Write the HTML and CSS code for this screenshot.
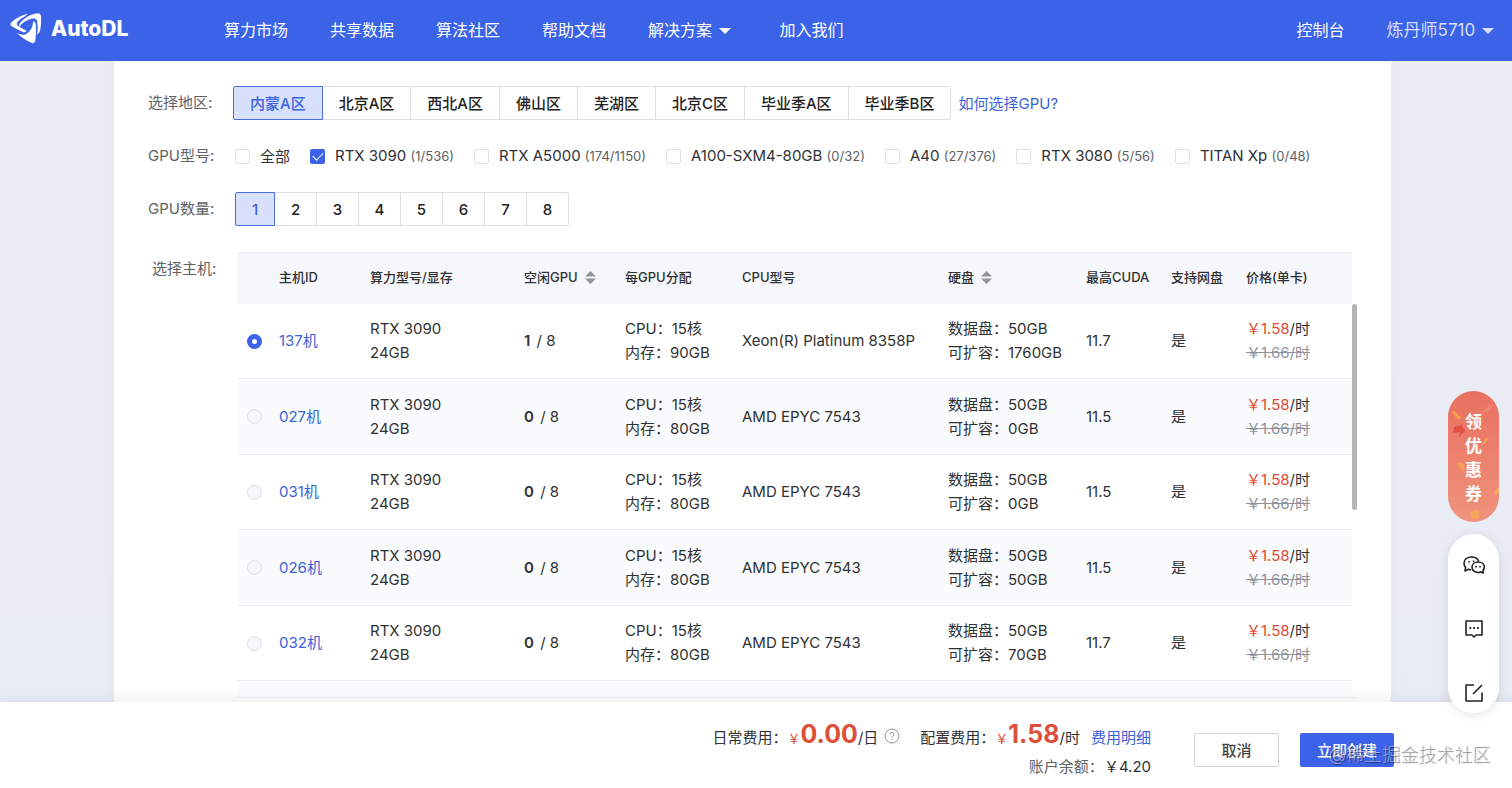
FILE: index.html
```html
<!DOCTYPE html>
<html lang="zh-CN">
<head>
    <meta charset="UTF-8">
    <meta name="viewport" content="width=device-width, initial-scale=1.0">
    <title>AutoDL</title>
    <link rel="stylesheet" href="styles.css">
</head>
<body>
    <header class="topbar">
        <a class="logo" href="#">
            <svg class="logo-mark" viewBox="0 0 96 94" fill="#fff">
                <path d="M1 33 Q2 28 12 21 Q30 7 54 2 L42 12 Q26 20 21 29 Q18 36 26 41 L50 54 Q46 60 40 58 Q20 50 5 40 Q0 37 1 33Z"/>
                <path d="M30 30 Q46 12 62 6 Q76 1 86 1 Q94 3 94 14 Q95 34 91 52 Q88 62 82 66 Q85 44 82 26 Q80 15 68 17 Q50 20 34 34 Q30 38 30 42 Q24 38 30 30Z"/>
                <path d="M20 61 Q34 68 46 65 Q58 60 64 48 Q68 40 70 25 Q78 26 78 40 Q79 68 76 84 Q74 93 66 91 Q42 82 20 61Z"/>
            </svg>
            <span class="logo-text">AutoDL</span>
        </a>
        <nav class="nav">
            <a href="#">算力市场</a>
            <a href="#">共享数据</a>
            <a href="#">算法社区</a>
            <a href="#">帮助文档</a>
            <a class="has-menu" href="#">解决方案 <i class="caret"></i></a>
            <a href="#">加入我们</a>
        </nav>
        <div class="user">
            <a href="#">控制台</a>
            <a class="user-name" href="#">炼丹师5710 <i class="caret"></i></a>
        </div>
    </header>

    <main class="page">
        <section class="card">
            <div class="row">
                <span class="label">选择地区:</span>
                <div class="btn-group">
                    <button class="active">内蒙A区</button>
                    <button>北京A区</button>
                    <button>西北A区</button>
                    <button>佛山区</button>
                    <button>芜湖区</button>
                    <button>北京C区</button>
                    <button>毕业季A区</button>
                    <button>毕业季B区</button>
                </div>
                <a class="help-link" href="#">如何选择GPU?</a>
            </div>

            <div class="row">
                <span class="label">GPU型号:</span>
                <div class="checks">
                    <label><input type="checkbox"><span>全部</span></label>
                    <label><input type="checkbox" checked><span>RTX 3090 <small>(1/536)</small></span></label>
                    <label><input type="checkbox"><span>RTX A5000 <small>(174/1150)</small></span></label>
                    <label><input type="checkbox"><span>A100-SXM4-80GB <small>(0/32)</small></span></label>
                    <label><input type="checkbox"><span>A40 <small>(27/376)</small></span></label>
                    <label><input type="checkbox"><span>RTX 3080 <small>(5/56)</small></span></label>
                    <label><input type="checkbox"><span>TITAN Xp <small>(0/48)</small></span></label>
                </div>
            </div>

            <div class="row">
                <span class="label">GPU数量:</span>
                <div class="btn-group count">
                    <button class="active">1</button>
                    <button>2</button>
                    <button>3</button>
                    <button>4</button>
                    <button>5</button>
                    <button>6</button>
                    <button>7</button>
                    <button>8</button>
                </div>
            </div>

            <div class="row host-row">
                <span class="label">选择主机:</span>
                <div class="table-wrap">
                    <table class="hosts">
                        <colgroup>
                            <col class="c-radio"><col class="c-id"><col class="c-model"><col class="c-free"><col class="c-alloc">
                            <col class="c-cpu"><col class="c-disk"><col class="c-cuda"><col class="c-net"><col class="c-price">
                        </colgroup>
                        <thead>
                            <tr>
                                <th></th>
                                <th>主机ID</th>
                                <th>算力型号/显存</th>
                                <th>空闲GPU <svg class="sort" viewBox="0 0 12 14"><path d="M6 0 L12 6 H0Z M0 8 H12 L6 14Z"/></svg></th>
                                <th>每GPU分配</th>
                                <th>CPU型号</th>
                                <th>硬盘 <svg class="sort" viewBox="0 0 12 14"><path d="M6 0 L12 6 H0Z M0 8 H12 L6 14Z"/></svg></th>
                                <th>最高CUDA</th>
                                <th>支持网盘</th>
                                <th>价格(单卡)</th>
                            </tr>
                        </thead>
                        <tbody>
                            <tr>
                                <td><input type="radio" name="host" id="h137" checked></td>
                                <td><label for="h137">137机</label></td>
                                <td>RTX 3090<br>24GB</td>
                                <td><b>1</b> / 8</td>
                                <td>CPU：15核<br>内存：90GB</td>
                                <td>Xeon(R) Platinum 8358P</td>
                                <td>数据盘：50GB<br>可扩容：1760GB</td>
                                <td>11.7</td>
                                <td>是</td>
                                <td><span class="price"><em>￥1.58</em>/时</span><br><del>￥1.66/时</del></td>
                            </tr>
                            <tr>
                                <td><input type="radio" name="host" id="h027"></td>
                                <td><label for="h027">027机</label></td>
                                <td>RTX 3090<br>24GB</td>
                                <td><b>0</b> / 8</td>
                                <td>CPU：15核<br>内存：80GB</td>
                                <td>AMD EPYC 7543</td>
                                <td>数据盘：50GB<br>可扩容：0GB</td>
                                <td>11.5</td>
                                <td>是</td>
                                <td><span class="price"><em>￥1.58</em>/时</span><br><del>￥1.66/时</del></td>
                            </tr>
                            <tr>
                                <td><input type="radio" name="host" id="h031"></td>
                                <td><label for="h031">031机</label></td>
                                <td>RTX 3090<br>24GB</td>
                                <td><b>0</b> / 8</td>
                                <td>CPU：15核<br>内存：80GB</td>
                                <td>AMD EPYC 7543</td>
                                <td>数据盘：50GB<br>可扩容：0GB</td>
                                <td>11.5</td>
                                <td>是</td>
                                <td><span class="price"><em>￥1.58</em>/时</span><br><del>￥1.66/时</del></td>
                            </tr>
                            <tr>
                                <td><input type="radio" name="host" id="h026"></td>
                                <td><label for="h026">026机</label></td>
                                <td>RTX 3090<br>24GB</td>
                                <td><b>0</b> / 8</td>
                                <td>CPU：15核<br>内存：80GB</td>
                                <td>AMD EPYC 7543</td>
                                <td>数据盘：50GB<br>可扩容：50GB</td>
                                <td>11.5</td>
                                <td>是</td>
                                <td><span class="price"><em>￥1.58</em>/时</span><br><del>￥1.66/时</del></td>
                            </tr>
                            <tr>
                                <td><input type="radio" name="host" id="h032"></td>
                                <td><label for="h032">032机</label></td>
                                <td>RTX 3090<br>24GB</td>
                                <td><b>0</b> / 8</td>
                                <td>CPU：15核<br>内存：80GB</td>
                                <td>AMD EPYC 7543</td>
                                <td>数据盘：50GB<br>可扩容：70GB</td>
                                <td>11.7</td>
                                <td>是</td>
                                <td><span class="price"><em>￥1.58</em>/时</span><br><del>￥1.66/时</del></td>
                            </tr>
                            <tr><td colspan="10"></td></tr>
                        </tbody>
                    </table>
                    <div class="scroll-track"><div class="scroll-thumb"></div></div>
                </div>
            </div>
        </section>
    </main>

    <footer class="paybar">
        <div class="costs">
            <div class="cost-line">
                <span class="cost">日常费用：<span class="yen">￥</span><strong>0.00</strong>/日</span>
                <svg class="tip" viewBox="0 0 16 16" fill="none" stroke="#909399"><circle cx="8" cy="8" r="7"/><path d="M6 6.400a2 2 0 1 1 3 1.700c-.7.4-1 .7-1 1.400M8 11v1"/></svg>
                <span class="cost">配置费用：<span class="yen">￥</span><strong>1.58</strong>/时</span>
                <a href="#">费用明细</a>
            </div>
            <div class="balance">账户余额：<span>￥4.20</span></div>
        </div>
        <button class="cancel">取消</button>
        <button class="create">立即创建</button>
        <span class="watermark">@稀土掘金技术社区</span>
    </footer>

    <aside class="side">
        <a class="coupon" href="#">
            <svg class="confetti" viewBox="0 0 51 131">
                <path d="M30 24 L43 13 Q47 17 40 21Z" fill="#ee8575"/>
                <path d="M5 20 Q8 20 9 23 Q10 26 13 25 L12 28 Q8 28 7 25 Q6 22 4 22Z" fill="#f8a34c"/>
                <path d="M6 36 L14 34 L17 40 L11 46 L12 41 L5 42Z" fill="#e24f45"/>
                <path d="M34 54 L36 49 Q38 46 41 47 L38 51 Q36 54 34 54Z" fill="#f8a34c"/>
                <path d="M9 72 Q14 70 16 74 L17 80 Q11 79 9 72Z" fill="#f5a055"/>
                <path d="M51 96 Q47 98 46 104 Q50 103 51 101Z" fill="#f8a95a"/>
                <path d="M22 122 Q25 117 31 120 Q33 124 29 128 L24 128Z" fill="#f5a45c"/>
            </svg>
            <span>领</span><span>优</span><span>惠</span><span>券</span>
        </a>
        <div class="tools">
            <button aria-label="微信">
                <svg viewBox="0 0 22 22" fill="none" stroke="#222" stroke-width="1.6" stroke-linejoin="round">
                    <path d="M8 16 Q7 16 5.500 15.300 L2 17 L2.600 13.400 Q1 11.600 1 9.300 C1 5.500 4.200 3 8.500 3 C12.300 3 15 5 15.700 7.500"/>
                    <path d="M15 8 C18.800 8 21.300 10.300 21.300 13 Q21.300 15 20 16.300 L20.300 19 L17.800 18 Q16.500 18.500 15 18.500 C11.500 18.500 9 16 9 13.200 C9 10.300 11.500 8 15 8Z"/>
                    <path d="M6 7v1.500M10.500 6.500v1.500M13 12v1.500M17 12v1.500"/>
                </svg>
            </button>
            <button aria-label="客服">
                <svg viewBox="0 0 22 22" fill="none" stroke="#222" stroke-width="1.6" stroke-linejoin="round">
                    <path d="M3 3 H19 V17 H13 L11 19 L9 17 H3Z"/>
                    <path d="M6.500 10h1.700M10.200 10h1.700M14 10h1.700" stroke-width="1.8"/>
                </svg>
            </button>
            <button aria-label="反馈">
                <svg viewBox="0 0 22 22" fill="none" stroke="#222" stroke-width="1.6" stroke-linejoin="round">
                    <path d="M11 3 H3 V19 H19 V10.500 M10 12 L19 3"/>
                </svg>
            </button>
        </div>
    </aside>
</body>
</html>
```
FILE: styles.css
```css
* {
    box-sizing: border-box;
}

body {
    margin: 0;
    height: 100vh;
    display: flex;
    flex-direction: column;
    overflow: hidden;
    font-family: Inter, "Noto Sans CJK SC", sans-serif;
    font-size: 15px;
    color: #303133;
    background: linear-gradient(#ecedf4, #e8ecf5);
}

a {
    color: #3b62d9;
    text-decoration: none;
}

button {
    font-family: inherit;
    font-size: 15px;
    cursor: pointer;
}

/* Top bar */
.topbar {
    flex: none;
    display: flex;
    align-items: center;
    height: 61px;
    padding: 0 18px 4px 10px;
    background: #3b63e8;
    font-size: 16px;
}

.topbar a {
    color: #fff;
}

.logo {
    display: flex;
    align-items: center;
    gap: 9px;
    width: 214px;
}

.logo-mark {
    width: 32px;
    height: 31px;
}

.logo-text {
    font-size: 21px;
    font-weight: 800;
}

.nav {
    display: flex;
    gap: 42px;
}

.has-menu {
    margin-right: 7px;
}

.user {
    display: flex;
    align-items: center;
    gap: 42px;
    margin-left: auto;
}

.topbar .user-name {
    font-size: 17px;
    color: #d5defa;
}

.caret {
    display: inline-block;
    margin-left: 2px;
    vertical-align: 2px;
    border: 6px solid transparent;
    border-top-color: currentColor;
    border-bottom: 0;
}

/* Main card */
.page {
    flex: 1;
    min-height: 0;
    display: flex;
    padding: 0 121px 0 114px;
}

.card {
    flex: 1;
    min-width: 0;
    display: flex;
    flex-direction: column;
    gap: 19px;
    padding: 25px 34px 4px;
    background: #fff;
    box-shadow: 0 0 16px rgba(0, 0, 0, 0.03);
}

.row {
    display: flex;
    align-items: center;
    height: 34px;
}

.label {
    flex: none;
    width: 85px;
    line-height: 34px;
    color: #606266;
}

.btn-group {
    display: flex;
}

.btn-group button {
    height: 34px;
    margin-left: -1px;
    padding: 0 16px 2px;
    border: 1px solid #dcdfe6;
    background: #fff;
    color: #222;
    font-weight: 500;
}

.btn-group button:first-child {
    margin-left: 0;
    border-radius: 2px 0 0 2px;
}

.btn-group button:last-child {
    border-radius: 0 2px 2px 0;
}

.btn-group .active {
    position: relative;
    border-color: #4a6de0;
    background: #d8e0fb;
    color: #3b62e0;
}

.btn-group.count {
    padding-left: 2px;
}

.btn-group.count button {
    width: 43px;
    padding: 0;
}

.btn-group.count button:first-child {
    width: 40px;
}

.help-link {
    margin-left: 7px;
    padding-bottom: 2px;
}

.checks {
    display: flex;
    gap: 20px;
    padding-left: 2px;
}

.checks label {
    display: flex;
    align-items: center;
    gap: 10px;
    white-space: nowrap;
}

.checks span {
    padding-bottom: 2px;
}

.checks small {
    font-size: 13px;
    color: #606266;
}

.checks input {
    appearance: none;
    flex: none;
    width: 15px;
    height: 15px;
    margin: 0;
    border: 1px solid #dcdfe6;
    border-radius: 2px;
    background: #fff;
}

.checks input:checked {
    display: grid;
    place-items: center;
    border-color: #3b62e8;
    background: #3b62e8;
}

.checks input:checked::before {
    content: "";
    width: 9px;
    height: 5px;
    border: solid #fff;
    border-width: 0 0 1px 1px;
    transform: translateY(-1px) rotate(-45deg);
}

/* Host table */
.host-row {
    flex: 1;
    min-height: 0;
    align-items: flex-start;
    height: auto;
    margin: 7px 0 0 4px;
}

.table-wrap {
    flex: 1;
    min-width: 0;
    height: 100%;
    display: flex;
    align-items: flex-start;
    overflow: hidden;
    border-bottom: 1px solid #ebeef5;
}

.hosts {
    flex: 1;
    table-layout: fixed;
    width: 100%;
    border-collapse: separate;
    border-spacing: 0;
    line-height: 24px;
}

.c-radio { width: 32px; }
.c-id { width: 91px; }
.c-model { width: 154px; }
.c-free { width: 101px; }
.c-alloc { width: 117px; }
.c-cpu { width: 206px; }
.c-disk { width: 138px; }
.c-cuda { width: 85px; }
.c-net { width: 75px; }

.hosts th {
    height: 52px;
    padding: 0 0 4px 10px;
    border-top: 1px solid #ebeef5;
    background: #f5f7fb;
    font-size: 13px;
    font-weight: 500;
    text-align: left;
    white-space: nowrap;
}

.hosts td {
    height: 75px;
    padding: 0 0 0 10px;
    border-bottom: 1px solid #ebeef5;
    white-space: nowrap;
}

.hosts tbody tr:nth-child(even) td {
    height: 76px;
    background: #f9fbfd;
}

.hosts label {
    color: #3b62d9;
}

.hosts b {
    margin-right: 2px;
    font-weight: 600;
}

.hosts input {
    appearance: none;
    display: block;
    width: 15px;
    height: 15px;
    margin: 0;
    border: 1px solid #dcdfe6;
    border-radius: 50%;
    background: #f5f7fa;
}

.hosts input:checked {
    border: 5px solid #3b62e8;
    background: #fff;
}

.hosts em {
    font-style: normal;
    color: #e2492f;
}

.hosts del {
    color: #909399;
}

.sort {
    width: 11px;
    height: 13px;
    margin-left: 4px;
    vertical-align: -2px;
    fill: #909399;
}

.scroll-track {
    flex: none;
    width: 5px;
    padding-top: 52px;
}

.scroll-thumb {
    height: 206px;
    border-radius: 3px;
    background: #b4b4b4;
}

/* Bottom bar */
.paybar {
    position: relative;
    flex: none;
    display: flex;
    align-items: flex-start;
    justify-content: flex-end;
    height: 86px;
    padding: 15px 118px 0 0;
    background: #fff;
    box-shadow: 0 -2px 14px rgba(0, 0, 0, 0.08);
}

.costs {
    margin-right: 43px;
    text-align: right;
}

.cost-line {
    display: flex;
    align-items: baseline;
    line-height: 34px;
}

.cost strong {
    font-size: 25px;
    font-weight: 700;
    color: #dc4f38;
}

.yen {
    font-size: 13px;
    color: #dc4f38;
}

.tip {
    width: 16px;
    height: 16px;
    margin: 0 20px 0 6px;
    align-self: center;
}

.cost-line a {
    margin-left: 11px;
}

.balance {
    line-height: 24px;
    color: #606266;
}

.balance span {
    color: #303133;
}

.paybar button {
    height: 34px;
    margin-top: 16px;
    padding: 0 0 2px;
    border-radius: 2px;
    font-weight: 500;
}

.cancel {
    width: 85px;
    border: 1px solid #d0d2d8;
    background: #fff;
    color: #444;
}

.create {
    width: 94px;
    margin-left: 21px;
    border: 0;
    background: #3b62e8;
    color: #fff;
}

.watermark {
    position: absolute;
    right: 22px;
    bottom: 19px;
    font-size: 18px;
    font-weight: 300;
    line-height: 28px;
    color: rgba(255, 255, 255, 0.5);
    text-shadow: 1px 1px 1px rgba(0, 0, 0, 0.55);
    pointer-events: none;
}

/* Floating buttons */
.side {
    position: fixed;
    right: 13px;
    bottom: 75px;
    width: 51px;
}

.coupon {
    position: relative;
    display: flex;
    flex-direction: column;
    align-items: center;
    height: 131px;
    margin-bottom: 12px;
    padding-top: 19px;
    border-radius: 26px;
    background: linear-gradient(#e9705f, #f0937c);
    color: #fff;
    font-size: 17px;
    font-weight: 700;
    line-height: 24px;
    overflow: hidden;
}

.coupon span {
    position: relative;
}

.confetti {
    position: absolute;
    inset: 0;
}

.tools {
    display: flex;
    flex-direction: column;
    align-items: center;
    gap: 42px;
    padding: 20px 0 9px;
    border-radius: 26px;
    background: #fff;
    box-shadow: 0 2px 12px rgba(0, 0, 0, 0.1);
}

.tools button {
    width: 22px;
    height: 22px;
    padding: 0;
    border: 0;
    background: none;
}
```
